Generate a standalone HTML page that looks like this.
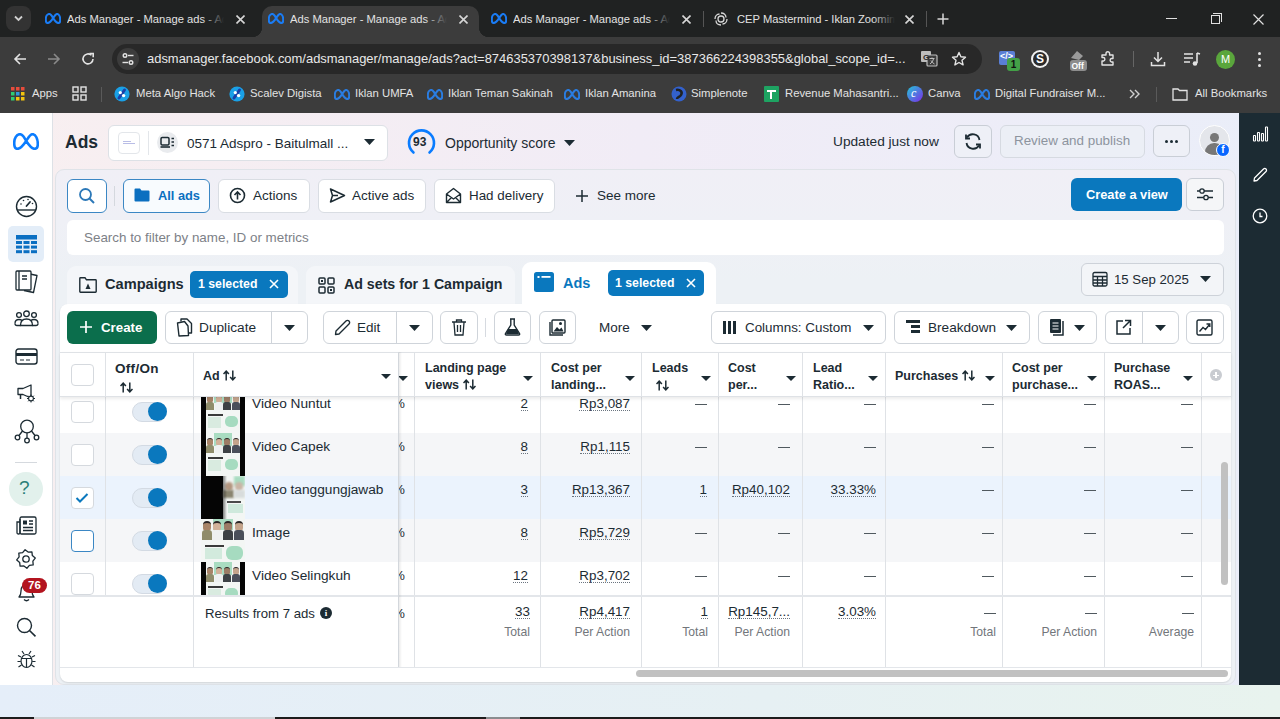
<!DOCTYPE html>
<html><head><meta charset="utf-8">
<style>
*{box-sizing:border-box;margin:0;padding:0}
html,body{width:1280px;height:719px;overflow:hidden;background:#e6eef6;font-family:"Liberation Sans",sans-serif;color:#1c2b33}
.a{position:absolute}
.nw{white-space:nowrap}
/* browser chrome */
#frame{left:0;top:0;width:1280px;height:37px;background:#202222}
#toolbar{left:0;top:37px;width:1280px;height:76px;background:#3c3c3c}
.tabt{font-size:11.2px;color:#e3e3e3;top:13px;white-space:nowrap;overflow:hidden}
.bm{font-size:11.3px;color:#e3e3e3;top:87px;white-space:nowrap}
/* page */
#page{left:0;top:113px;width:1280px;height:572px;background:linear-gradient(90deg,#f8eff0 0%,#f1ecf6 50%,#eaeef9 100%)}
#lnav{left:0;top:113px;width:53px;height:572px;background:#fff;border-right:1px solid #dde1e6}
#rnav{left:1239px;top:113px;width:41px;height:572px;background:#1c2b33}
#bottom{left:0;top:685px;width:1280px;height:32px;background:linear-gradient(90deg,#e5eef9,#e6f0f3 60%,#e8f3ee)}
#taskbar{left:0;top:716px;width:1280px;height:3px;background:#d9dde0}
.btn{position:absolute;background:#fff;border:1px solid #cbd2d9;border-radius:6px}
.t14{font-size:13.5px}
</style></head><body>
<!-- ============ BROWSER CHROME ============ -->
<div id="frame" class="a"></div>
<div id="toolbar" class="a"></div>

<!-- tab search btn -->
<div class="a" style="left:6px;top:6px;width:25px;height:25px;border-radius:8px;background:#333"></div>
<svg class="a" style="left:12px;top:13px" width="13" height="11" viewBox="0 0 13 11"><path d="M3 3.5 L6.5 7 L10 3.5" stroke="#d0d0d0" stroke-width="1.8" fill="none"/></svg>
<!-- active tab -->
<div class="a" style="left:262px;top:6px;width:217px;height:31px;background:#3c3c3c;border-radius:10px 10px 0 0"></div>
<div class="a" style="left:252px;top:27px;width:10px;height:10px;background:radial-gradient(circle at 0 0,#202222 10px,#3c3c3c 10.5px)"></div>
<div class="a" style="left:479px;top:27px;width:10px;height:10px;background:radial-gradient(circle at 10px 0,#202222 10px,#3c3c3c 10.5px)"></div>
<svg class="a" style="left:45px;top:13px" width="16" height="11" viewBox="0 0 26 17"><path d="M13.2,8 C11.5,4.5 9.5,1.2 7,1.2 C3.5,1.2 1.2,5.5 1.2,10 C1.2,13.5 2.5,15.8 4.5,15.8 C7.5,15.8 10.5,12 13.2,8 C15.5,4.5 17,1.2 19.5,1.2 C22.8,1.2 24.8,6 24.8,11 C24.8,14 23.5,15.8 21.5,15.8 C18.5,15.8 15.5,11.5 13.2,8 Z" stroke="#1a7cf5" stroke-width="3.4499999999999997" fill="none" stroke-linejoin="round"/></svg><div class="a tabt" style="left:67px;width:157px;">Ads Manager - Manage ads - Ads Manager</div><div class="a" style="left:202px;top:8px;width:22px;height:20px;background:linear-gradient(90deg,rgba(0,0,0,0),#202222)"></div><svg class="a" style="left:235.5px;top:14.5px" width="9" height="9" viewBox="0 0 9 9"><path d="M0.5 0.5 L8.5 8.5 M8.5 0.5 L0.5 8.5" stroke="#d6d6d6" stroke-width="1.6"/></svg><svg class="a" style="left:268px;top:13px" width="16" height="11" viewBox="0 0 26 17"><path d="M13.2,8 C11.5,4.5 9.5,1.2 7,1.2 C3.5,1.2 1.2,5.5 1.2,10 C1.2,13.5 2.5,15.8 4.5,15.8 C7.5,15.8 10.5,12 13.2,8 C15.5,4.5 17,1.2 19.5,1.2 C22.8,1.2 24.8,6 24.8,11 C24.8,14 23.5,15.8 21.5,15.8 C18.5,15.8 15.5,11.5 13.2,8 Z" stroke="#1a7cf5" stroke-width="3.4499999999999997" fill="none" stroke-linejoin="round"/></svg><div class="a tabt" style="left:290px;width:157px;">Ads Manager - Manage ads - Ads Manager</div><div class="a" style="left:425px;top:8px;width:22px;height:20px;background:linear-gradient(90deg,rgba(0,0,0,0),#3c3c3c)"></div><svg class="a" style="left:458.5px;top:14.5px" width="9" height="9" viewBox="0 0 9 9"><path d="M0.5 0.5 L8.5 8.5 M8.5 0.5 L0.5 8.5" stroke="#d6d6d6" stroke-width="1.6"/></svg><svg class="a" style="left:491px;top:13px" width="16" height="11" viewBox="0 0 26 17"><path d="M13.2,8 C11.5,4.5 9.5,1.2 7,1.2 C3.5,1.2 1.2,5.5 1.2,10 C1.2,13.5 2.5,15.8 4.5,15.8 C7.5,15.8 10.5,12 13.2,8 C15.5,4.5 17,1.2 19.5,1.2 C22.8,1.2 24.8,6 24.8,11 C24.8,14 23.5,15.8 21.5,15.8 C18.5,15.8 15.5,11.5 13.2,8 Z" stroke="#1a7cf5" stroke-width="3.4499999999999997" fill="none" stroke-linejoin="round"/></svg><div class="a tabt" style="left:513px;width:157px;">Ads Manager - Manage ads - Ads Manager</div><div class="a" style="left:648px;top:8px;width:22px;height:20px;background:linear-gradient(90deg,rgba(0,0,0,0),#202222)"></div><svg class="a" style="left:681.5px;top:14.5px" width="9" height="9" viewBox="0 0 9 9"><path d="M0.5 0.5 L8.5 8.5 M8.5 0.5 L0.5 8.5" stroke="#d6d6d6" stroke-width="1.6"/></svg><div class="a" style="left:703px;top:11px;width:1px;height:16px;background:#555"></div><svg class="a" style="left:713px;top:11px" width="16" height="16" viewBox="0 0 16 16"><g stroke="#d8d8d8" stroke-width="1.3" fill="none"><circle cx="8" cy="8" r="3"/><path d="M8 2 C11 2 13 4 13 6.5 M14 8 C14 11 12 13 9.5 13 M8 14 C5 14 3 12 3 9.5 M2 8 C2 5 4 3 6.5 3"/></g></svg><div class="a tabt" style="left:737px;width:158px;">CEP Mastermind - Iklan Zooming</div><div class="a" style="left:873px;top:8px;width:22px;height:20px;background:linear-gradient(90deg,rgba(0,0,0,0),#202222)"></div><svg class="a" style="left:904.5px;top:14.5px" width="9" height="9" viewBox="0 0 9 9"><path d="M0.5 0.5 L8.5 8.5 M8.5 0.5 L0.5 8.5" stroke="#d6d6d6" stroke-width="1.6"/></svg><div class="a" style="left:926px;top:11px;width:1px;height:16px;background:#555"></div><svg class="a" style="left:937px;top:13px" width="12" height="12" viewBox="0 0 12 12"><path d="M6 0.5 V11.5 M0.5 6 H11.5" stroke="#d8d8d8" stroke-width="1.5"/></svg><div class="a" style="left:1166px;top:18px;width:11px;height:1px;background:#e0e0e0"></div><div class="a" style="left:1211px;top:15px;width:9px;height:9px;border:1px solid #e0e0e0"></div><div class="a" style="left:1213px;top:13px;width:9px;height:9px;border-top:1px solid #e0e0e0;border-right:1px solid #e0e0e0"></div><svg class="a" style="left:1252.5px;top:13.5px" width="11" height="11" viewBox="0 0 11 11"><path d="M0.5 0.5 L10.5 10.5 M10.5 0.5 L0.5 10.5" stroke="#e0e0e0" stroke-width="1.2"/></svg><svg class="a" style="left:12px;top:51px" width="16" height="16" viewBox="0 0 16 16"><path d="M14 8 H3 M8 3 L3 8 L8 13" stroke="#e3e3e3" stroke-width="1.6" fill="none"/></svg><svg class="a" style="left:46px;top:51px" width="16" height="16" viewBox="0 0 16 16"><path d="M2 8 H13 M8 3 L13 8 L8 13" stroke="#8a8a8a" stroke-width="1.6" fill="none"/></svg><svg class="a" style="left:80px;top:51px" width="16" height="16" viewBox="0 0 16 16"><path d="M13 8 A5 5 0 1 1 11.5 4.3" stroke="#e3e3e3" stroke-width="1.6" fill="none"/><path d="M9.5 2.5 H13.2 V6.2" stroke="#e3e3e3" stroke-width="1.6" fill="none"/></svg><div class="a" style="left:112px;top:44px;width:870px;height:30px;border-radius:15px;background:#282828"></div><div class="a" style="left:117px;top:48px;width:22px;height:22px;border-radius:11px;background:#3c3c3c"></div><svg class="a" style="left:121px;top:52px" width="14" height="14" viewBox="0 0 14 14"><g stroke="#e3e3e3" stroke-width="1.4" fill="none"><circle cx="4" cy="3.5" r="1.8"/><path d="M7 3.5 H12.5"/><circle cx="10" cy="10.5" r="1.8"/><path d="M1.5 10.5 H7"/></g></svg><div class="a nw" style="left:147px;top:51px;font-size:12.95px;color:#e8e8e8">adsmanager.facebook.com/adsmanager/manage/ads?act=874635370398137&amp;business_id=387366224398355&amp;global_scope_id=...</div><svg class="a" style="left:920px;top:50px" width="18" height="17" viewBox="0 0 18 17"><rect x="1" y="1" width="10" height="11" rx="1" fill="#bdbdbd"/><rect x="7" y="5" width="10" height="11" rx="1" fill="#3c3c3c" stroke="#bdbdbd" stroke-width="1.2"/><text x="3" y="10" font-size="8" font-family="Liberation Sans" font-weight="bold" fill="#282828">G</text><path d="M9.5 8.5 H14.5 M12 7.5 V9 M10 14 Q13 12 13.5 9 M11 10.5 Q12.5 13 14.5 14" stroke="#bdbdbd" stroke-width="1" fill="none"/></svg><svg class="a" style="left:951px;top:51px" width="16" height="16" viewBox="0 0 16 16"><path d="M8 1.5 L9.9 5.8 L14.5 6.2 L11 9.3 L12.1 13.9 L8 11.5 L3.9 13.9 L5 9.3 L1.5 6.2 L6.1 5.8 Z" stroke="#e3e3e3" stroke-width="1.4" fill="none" stroke-linejoin="round"/></svg><div class="a" style="left:999px;top:51px;width:16px;height:14px;background:#5a7fd6;border-radius:2px"></div><div class="a nw" style="left:1000px;top:51px;font-size:9px;color:#fff;font-weight:bold">&lt;/&gt;</div><div class="a" style="left:1007px;top:58px;width:13px;height:13px;background:#43a047;border-radius:3px;color:#111;font-size:10px;font-weight:bold;text-align:center;line-height:13px">1</div><div class="a" style="left:1031px;top:50px;width:18px;height:18px;border-radius:9px;background:#f2f2f2"></div><div class="a" style="left:1033px;top:52px;width:14px;height:14px;border-radius:7px;background:#2b2b2b;color:#fff;font-size:12px;font-weight:bold;text-align:center;line-height:14px">S</div><svg class="a" style="left:1067px;top:48px" width="22" height="24" viewBox="0 0 22 24"><path d="M4 10 L10 3 L16 8 L12 12 Z" fill="#9a9a9a"/><rect x="3" y="12" width="17" height="11" rx="3" fill="#8d8d8d"/><text x="4.5" y="21" font-size="8.5" font-weight="bold" font-family="Liberation Sans" fill="#fff">Off</text></svg><svg class="a" style="left:1099px;top:50px" width="18" height="18" viewBox="0 0 18 18"><path d="M3 5 H7 V3.5 A1.8 1.8 0 0 1 10.6 3.5 V5 H14 V8.5 H12.5 A1.8 1.8 0 0 0 12.5 12 H14 V15 H3 V11 H4.5 A1.8 1.8 0 0 0 4.5 7.5 H3 Z" stroke="#e3e3e3" stroke-width="1.4" fill="none" stroke-linejoin="round"/></svg><div class="a" style="left:1133px;top:51px;width:1px;height:16px;background:#666"></div><svg class="a" style="left:1149px;top:50px" width="18" height="18" viewBox="0 0 18 18"><path d="M9 2 V11 M5 7.5 L9 11.5 L13 7.5 M2.5 12 V15.5 H15.5 V12" stroke="#e3e3e3" stroke-width="1.5" fill="none"/></svg><svg class="a" style="left:1183px;top:51px" width="18" height="16" viewBox="0 0 18 16"><path d="M1 3 H10 M1 7 H10 M1 11 H7" stroke="#e3e3e3" stroke-width="1.5"/><path d="M14 2 V12" stroke="#e3e3e3" stroke-width="1.6"/><circle cx="12" cy="12.5" r="2.3" fill="#e3e3e3"/><path d="M14 2 L17 3" stroke="#e3e3e3" stroke-width="1.5"/></svg><div class="a" style="left:1216px;top:50px;width:19px;height:19px;border-radius:10px;background:#5aa63c;color:#fff;font-size:11px;text-align:center;line-height:19px">M</div><div class="a" style="left:1258px;top:52px;width:3px;height:3px;border-radius:2px;background:#e3e3e3"></div><div class="a" style="left:1258px;top:58px;width:3px;height:3px;border-radius:2px;background:#e3e3e3"></div><div class="a" style="left:1258px;top:64px;width:3px;height:3px;border-radius:2px;background:#e3e3e3"></div><svg class="a" style="left:11px;top:87px" width="14" height="14" viewBox="0 0 14 14"><g><rect x="0" y="0" width="3.5" height="3.5" fill="#e74c3c"/><rect x="5" y="0" width="3.5" height="3.5" fill="#e74c3c"/><rect x="10" y="0" width="3.5" height="3.5" fill="#e74c3c"/><rect x="0" y="5" width="3.5" height="3.5" fill="#2ecc71"/><rect x="5" y="5" width="3.5" height="3.5" fill="#3498db"/><rect x="10" y="5" width="3.5" height="3.5" fill="#f1c40f"/><rect x="0" y="10" width="3.5" height="3.5" fill="#2ecc71"/><rect x="5" y="10" width="3.5" height="3.5" fill="#f1c40f"/><rect x="10" y="10" width="3.5" height="3.5" fill="#f1c40f"/></g></svg><div class="a bm" style="left:32px">Apps</div><svg class="a" style="left:72px;top:86px" width="15" height="15" viewBox="0 0 15 15"><g stroke="#e3e3e3" stroke-width="1.4" fill="none"><rect x="1" y="1" width="5" height="5"/><rect x="9" y="1" width="5" height="5"/><rect x="1" y="9" width="5" height="5"/><rect x="9" y="9" width="5" height="5"/></g></svg><div class="a" style="left:101px;top:87px;width:1px;height:15px;background:#5a5a5a"></div><svg class="a" style="left:114px;top:86px" width="16" height="16" viewBox="0 0 16 16"><circle cx="8" cy="8" r="7.6" fill="#1aa0e6"/><path d="M10.5 4 L5 12" stroke="#1a3fa8" stroke-width="3" stroke-linecap="round"/><circle cx="6.3" cy="6.6" r="1.6" fill="#fff"/><circle cx="9.6" cy="9.6" r="1.7" fill="#fff"/></svg><div class="a bm" style="left:136px">Meta Algo Hack</div><svg class="a" style="left:229px;top:86px" width="16" height="16" viewBox="0 0 16 16"><circle cx="8" cy="8" r="7.6" fill="#1aa0e6"/><path d="M10.5 4 L5 12" stroke="#1a3fa8" stroke-width="3" stroke-linecap="round"/><circle cx="6.3" cy="6.6" r="1.6" fill="#fff"/><circle cx="9.6" cy="9.6" r="1.7" fill="#fff"/></svg><div class="a bm" style="left:250px">Scalev Digista</div><svg class="a" style="left:334px;top:89px" width="16" height="11" viewBox="0 0 26 17"><path d="M13.2,8 C11.5,4.5 9.5,1.2 7,1.2 C3.5,1.2 1.2,5.5 1.2,10 C1.2,13.5 2.5,15.8 4.5,15.8 C7.5,15.8 10.5,12 13.2,8 C15.5,4.5 17,1.2 19.5,1.2 C22.8,1.2 24.8,6 24.8,11 C24.8,14 23.5,15.8 21.5,15.8 C18.5,15.8 15.5,11.5 13.2,8 Z" stroke="#2a7de1" stroke-width="3.4499999999999997" fill="none" stroke-linejoin="round"/></svg><div class="a bm" style="left:355px">Iklan UMFA</div><svg class="a" style="left:427px;top:89px" width="16" height="11" viewBox="0 0 26 17"><path d="M13.2,8 C11.5,4.5 9.5,1.2 7,1.2 C3.5,1.2 1.2,5.5 1.2,10 C1.2,13.5 2.5,15.8 4.5,15.8 C7.5,15.8 10.5,12 13.2,8 C15.5,4.5 17,1.2 19.5,1.2 C22.8,1.2 24.8,6 24.8,11 C24.8,14 23.5,15.8 21.5,15.8 C18.5,15.8 15.5,11.5 13.2,8 Z" stroke="#2a7de1" stroke-width="3.4499999999999997" fill="none" stroke-linejoin="round"/></svg><div class="a bm" style="left:448px">Iklan Teman Sakinah</div><svg class="a" style="left:564px;top:89px" width="16" height="11" viewBox="0 0 26 17"><path d="M13.2,8 C11.5,4.5 9.5,1.2 7,1.2 C3.5,1.2 1.2,5.5 1.2,10 C1.2,13.5 2.5,15.8 4.5,15.8 C7.5,15.8 10.5,12 13.2,8 C15.5,4.5 17,1.2 19.5,1.2 C22.8,1.2 24.8,6 24.8,11 C24.8,14 23.5,15.8 21.5,15.8 C18.5,15.8 15.5,11.5 13.2,8 Z" stroke="#2a7de1" stroke-width="3.4499999999999997" fill="none" stroke-linejoin="round"/></svg><div class="a bm" style="left:585px">Iklan Amanina</div><svg class="a" style="left:671px;top:86px" width="16" height="16" viewBox="0 0 16 16"><circle cx="8" cy="8" r="7.5" fill="#3361cc"/><path d="M5 4 C9 3 12 6 10 9 C9 11 6 11 6 13" stroke="#202222" stroke-width="2.5" fill="none"/></svg><div class="a bm" style="left:691px">Simplenote</div><div class="a" style="left:764px;top:86px;width:15px;height:16px;background:#1ea362;border-radius:1px"></div><div class="a" style="left:767px;top:90px;width:9px;height:2px;background:#fff"></div><div class="a" style="left:770px;top:90px;width:2px;height:9px;background:#fff"></div><div class="a bm" style="left:785px">Revenue Mahasantri...</div><div class="a" style="left:907px;top:86px;width:16px;height:16px;border-radius:8px;background:linear-gradient(135deg,#22c7d8,#7d2ae8)"></div><div class="a" style="left:911px;top:86px;font-size:12px;color:#fff;font-style:italic;font-family:Liberation Serif">c</div><div class="a bm" style="left:928px">Canva</div><svg class="a" style="left:974px;top:89px" width="16" height="11" viewBox="0 0 26 17"><path d="M13.2,8 C11.5,4.5 9.5,1.2 7,1.2 C3.5,1.2 1.2,5.5 1.2,10 C1.2,13.5 2.5,15.8 4.5,15.8 C7.5,15.8 10.5,12 13.2,8 C15.5,4.5 17,1.2 19.5,1.2 C22.8,1.2 24.8,6 24.8,11 C24.8,14 23.5,15.8 21.5,15.8 C18.5,15.8 15.5,11.5 13.2,8 Z" stroke="#2a7de1" stroke-width="3.4499999999999997" fill="none" stroke-linejoin="round"/></svg><div class="a bm" style="left:995px">Digital Fundraiser M...</div><svg class="a" style="left:1129px;top:89px" width="12" height="10" viewBox="0 0 12 10"><path d="M1 1 L5 5 L1 9 M6 1 L10 5 L6 9" stroke="#cfcfcf" stroke-width="1.4" fill="none"/></svg><div class="a" style="left:1156px;top:87px;width:1px;height:15px;background:#5a5a5a"></div><svg class="a" style="left:1172px;top:87px" width="16" height="14" viewBox="0 0 16 14"><path d="M1 2 H6 L7.5 3.5 H15 V13 H1 Z" stroke="#e3e3e3" stroke-width="1.3" fill="none"/></svg><div class="a bm" style="left:1195px">All Bookmarks</div>
<!--PAGE-->
<!--P1-->
<div id="page" class="a"></div>
<div id="bottom" class="a"></div><div class="a" style="left:0;top:717px;width:1280px;height:2px;background:#1c1c1c"></div><div class="a" style="left:34px;top:717px;width:241px;height:2px;background:#cfd3d6"></div><div class="a" style="left:486px;top:717px;width:34px;height:2px;background:#8a8d90"></div>
<div id="lnav" class="a"></div>
<div id="rnav" class="a"></div>
<svg class="a" style="left:13px;top:133px" width="26" height="17" viewBox="0 0 26 17"><path d="M13.2,8 C11.5,4.5 9.5,1.2 7,1.2 C3.5,1.2 1.2,5.5 1.2,10 C1.2,13.5 2.5,15.8 4.5,15.8 C7.5,15.8 10.5,12 13.2,8 C15.5,4.5 17,1.2 19.5,1.2 C22.8,1.2 24.8,6 24.8,11 C24.8,14 23.5,15.8 21.5,15.8 C18.5,15.8 15.5,11.5 13.2,8 Z" stroke="#0a7cff" stroke-width="2.6" fill="none" stroke-linejoin="round"/></svg>
<div class="a nw" style="left:65px;top:131.5px;font-size:17.5px;font-weight:bold;color:#1c2b33">Ads</div>
<div class="btn" style="left:108px;top:125px;width:280px;height:36px;border-color:#dde1e6"></div>
<div class="a" style="left:118px;top:132px;width:22px;height:22px;border:1px solid #e3e6ea;border-radius:4px;background:#fff"></div><div class="a" style="left:123px;top:141px;width:8px;height:1px;background:#b9bde6"></div><div class="a" style="left:123px;top:143px;width:12px;height:1px;background:#b9bde6"></div>
<div class="a" style="left:148px;top:131px;width:1px;height:24px;background:#e3e6ea"></div>
<div class="a" style="left:157px;top:132px;width:21px;height:21px;border-radius:11px;background:#e9ebee"></div>
<svg class="a" style="left:160px;top:136px" width="15" height="13" viewBox="0 0 15 13"><rect x="1" y="1.5" width="8" height="7.5" rx="1.2" stroke="#1c2b33" stroke-width="1.5" fill="none"/><path d="M0.5 11 H10" stroke="#1c2b33" stroke-width="1.6"/><path d="M11.5 2.5 H14 M11.5 6 H14 M11.5 9.5 H14" stroke="#1c2b33" stroke-width="1.4"/></svg>
<div class="a nw" style="left:187px;top:136px;font-size:13.5px;color:#1c2b33">0571 Adspro - Baitulmall ...</div>
<svg class="a" style="left:363.5px;top:139px" width="11" height="6" viewBox="0 0 11 6"><path d="M0 0 H11 L5.5 6 Z" fill="#1c2b33"/></svg>
<svg class="a" style="left:407px;top:128px" width="29" height="29" viewBox="0 0 29 29"><path d="M6.5 24.5 A12.5 12.5 0 1 1 22.5 24.5" stroke="#0a7cff" stroke-width="2.6" fill="none" stroke-linecap="round"/></svg>
<div class="a nw" style="left:413px;top:135px;font-size:12px;font-weight:bold;color:#1c2b33">93</div>
<div class="a nw" style="left:445px;top:135px;font-size:14px;color:#1c2b33">Opportunity score</div>
<svg class="a" style="left:563.5px;top:140px" width="11" height="6" viewBox="0 0 11 6"><path d="M0 0 H11 L5.5 6 Z" fill="#1c2b33"/></svg>
<div class="a nw" style="left:833px;top:134px;font-size:13.7px;color:#1c2b33">Updated just now</div>
<div class="btn" style="left:954px;top:125px;width:38px;height:33px;background:#eef0f7;border-color:#c9ced6"></div>
<svg class="a" style="left:963px;top:132px" width="20" height="19" viewBox="0 0 20 19"><path d="M16.5 8 A6.8 6.8 0 0 0 4 5.5 M3.5 11 A6.8 6.8 0 0 0 16 13.5" stroke="#1c2b33" stroke-width="1.8" fill="none"/><path d="M3 2.5 V6.5 H7" stroke="#1c2b33" stroke-width="1.8" fill="none"/><path d="M17 16.5 V12.5 H13" stroke="#1c2b33" stroke-width="1.8" fill="none"/></svg>
<div class="btn" style="left:1000px;top:125px;width:145px;height:33px;background:#eceff6;border-color:#d6dae1"></div>
<div class="a nw" style="left:1014px;top:133px;font-size:13.4px;color:#8d949e">Review and publish</div>
<div class="btn" style="left:1153px;top:125px;width:37px;height:32px;background:#eef0f7;border-color:#c9ced6"></div>
<div class="a" style="left:1165px;top:140px;width:3px;height:3px;border-radius:2px;background:#1c2b33"></div><div class="a" style="left:1170px;top:140px;width:3px;height:3px;border-radius:2px;background:#1c2b33"></div><div class="a" style="left:1175px;top:140px;width:3px;height:3px;border-radius:2px;background:#1c2b33"></div>
<div class="a" style="left:1199px;top:125px;width:31px;height:31px;border-radius:16px;background:#e4e6eb;border:1.5px solid #fff;overflow:hidden"><div class="a" style="left:10px;top:7px;width:9px;height:9px;border-radius:5px;background:#777"></div><div class="a" style="left:5px;top:17px;width:19px;height:14px;border-radius:9px 9px 0 0;background:#777"></div></div>
<div class="a" style="left:1216px;top:143px;width:14px;height:14px;border-radius:7px;background:#0866ff;border:1.5px solid #fff;color:#fff;font-size:10px;font-weight:bold;text-align:center;line-height:12px">f</div>
<svg class="a" style="left:1252px;top:126px" width="17" height="16" viewBox="0 0 17 16"><g fill="none" stroke="#fff" stroke-width="1.1"><rect x="1.5" y="9.5" width="2" height="5.5" rx=".5"/><rect x="5.5" y="6.5" width="2" height="8.5" rx=".5"/><rect x="9.5" y="7.5" width="2" height="7.5" rx=".5"/><rect x="13.5" y="1" width="2" height="14" rx=".5"/></g></svg>
<svg class="a" style="left:1252px;top:167px" width="16" height="16" viewBox="0 0 16 16"><path d="M2 14 L2.5 11 L11.5 2 A1.5 1.5 0 0 1 14 4.5 L5 13.5 Z" stroke="#fff" stroke-width="1.3" fill="none" stroke-linejoin="round"/></svg>
<svg class="a" style="left:1252px;top:208px" width="16" height="16" viewBox="0 0 16 16"><circle cx="8" cy="8" r="6.8" stroke="#fff" stroke-width="1.3" fill="none"/><path d="M8 4.5 V8.5 H10.5" stroke="#fff" stroke-width="1.3" fill="none"/></svg>
<!--/P1-->
<!--P2-->
<div class="a" style="left:55px;top:169px;width:1181px;height:516px;background:linear-gradient(180deg,#f0eff6 0px,#eff0f6 50px,#edf1f5 110px);border:1px solid #dfe3e8;border-radius:9px"></div>
<div class="btn" style="left:67px;top:179px;width:40px;height:34px;border:1.5px solid #3b87c4;background:#fff"></div>
<svg class="a" style="left:78px;top:187px" width="18" height="18" viewBox="0 0 18 18"><circle cx="7.5" cy="7.5" r="5.5" stroke="#2c78b8" stroke-width="1.8" fill="none"/><path d="M11.5 11.5 L16 16" stroke="#2c78b8" stroke-width="1.9"/></svg>
<div class="a" style="left:114px;top:186px;width:1px;height:20px;background:#d4d8de"></div>
<div class="btn" style="left:123px;top:179px;width:87px;height:34px;border:1.5px solid #3b87c4;background:#f8fbfe"></div>
<svg class="a" style="left:134px;top:188px" width="16" height="14" viewBox="0 0 16 14"><path d="M0.5 1.5 Q0.5 0.5 1.5 0.5 H6 L7.5 2.5 H14.5 Q15.5 2.5 15.5 3.5 V12.5 Q15.5 13.5 14.5 13.5 H1.5 Q0.5 13.5 0.5 12.5 Z" fill="#0b6fc0"/></svg>
<div class="a nw" style="left:158px;top:188px;font-size:12.8px;font-weight:bold;color:#0b6fc0">All ads</div>
<div class="btn" style="left:218px;top:179px;width:92px;height:34px;border-color:#d9dde3"></div>
<svg class="a" style="left:229px;top:187px" width="17" height="17" viewBox="0 0 17 17"><circle cx="8.5" cy="8.5" r="7" stroke="#1c2b33" stroke-width="1.6" fill="none"/><path d="M8.5 12.5 V5 M5.5 8 L8.5 5 L11.5 8" stroke="#1c2b33" stroke-width="1.6" fill="none"/></svg>
<div class="a nw" style="left:253px;top:188px;font-size:13.5px;color:#1c2b33">Actions</div>
<div class="btn" style="left:318px;top:179px;width:108px;height:34px;border-color:#d9dde3"></div>
<svg class="a" style="left:329px;top:187px" width="17" height="17" viewBox="0 0 17 17"><path d="M1.5 2 L15.5 8.5 L1.5 15 L3.5 8.5 Z M3.5 8.5 H9" stroke="#1c2b33" stroke-width="1.5" fill="none" stroke-linejoin="round"/></svg>
<div class="a nw" style="left:352px;top:188px;font-size:13.5px;color:#1c2b33">Active ads</div>
<div class="btn" style="left:434px;top:179px;width:121px;height:34px;border-color:#d9dde3"></div>
<svg class="a" style="left:445px;top:187px" width="17" height="17" viewBox="0 0 17 17"><path d="M1.5 7 L8.5 1.5 L15.5 7 V15.5 H1.5 Z M1.5 7 L8.5 12 L15.5 7 M1.5 15.5 L6.5 10.5 M15.5 15.5 L10.5 10.5" stroke="#1c2b33" stroke-width="1.4" fill="none" stroke-linejoin="round"/></svg>
<div class="a nw" style="left:469px;top:188px;font-size:13.4px;color:#1c2b33">Had delivery</div>
<svg class="a" style="left:576px;top:190px" width="12" height="12" viewBox="0 0 12 12"><path d="M6 0 V12 M0 6 H12" stroke="#1c2b33" stroke-width="1.5"/></svg>
<div class="a nw" style="left:597px;top:188px;font-size:13.5px;color:#1c2b33">See more</div>
<div class="a" style="left:1071px;top:178px;width:111px;height:33px;border-radius:6px;background:#0a78be"></div>
<div class="a nw" style="left:1086px;top:187px;font-size:12.8px;font-weight:bold;color:#fff">Create a view</div>
<div class="btn" style="left:1186px;top:178px;width:38px;height:33px;background:#f5f6f8;border-color:#c9ced6"></div>
<svg class="a" style="left:1196px;top:187px" width="18" height="15" viewBox="0 0 18 15"><path d="M1 4 H17 M1 10.5 H17" stroke="#1c2b33" stroke-width="1.3"/><circle cx="6" cy="4" r="2.2" fill="#f5f6f8" stroke="#1c2b33" stroke-width="1.3"/><circle cx="10" cy="10.5" r="2.2" fill="#f5f6f8" stroke="#1c2b33" stroke-width="1.3"/></svg>
<div class="a" style="left:67px;top:220px;width:1157px;height:35px;background:#fff;border-radius:6px"></div>
<div class="a nw" style="left:84px;top:230px;font-size:13.4px;color:#7d8187">Search to filter by name, ID or metrics</div>
<div class="a" style="left:67px;top:266px;width:231px;height:40px;background:#f4f6f9;border-radius:9px 9px 0 0"></div>
<svg class="a" style="left:79px;top:277px" width="18" height="16" viewBox="0 0 18 16"><path d="M0.8 1.5 Q0.8 0.8 1.5 0.8 H6 L7.5 2.8 H16.5 Q17.2 2.8 17.2 3.5 V14.5 Q17.2 15.2 16.5 15.2 H1.5 Q0.8 15.2 0.8 14.5 Z" stroke="#1c2b33" stroke-width="1.4" fill="none"/><path d="M6.5 12 L9 6.5 L11.5 12 Z" fill="#1c2b33"/></svg>
<div class="a nw" style="left:105px;top:276px;font-size:14.6px;font-weight:bold;color:#1c2b33">Campaigns</div>
<div class="a" style="left:190px;top:271px;width:98px;height:27px;border-radius:5px;background:#0a78be"></div>
<div class="a nw" style="left:198px;top:277px;font-size:12.3px;font-weight:bold;color:#fff">1 selected</div>
<svg class="a" style="left:269px;top:279px" width="10" height="10" viewBox="0 0 10 10"><path d="M1 1 L9 9 M9 1 L1 9" stroke="#fff" stroke-width="1.6"/></svg>
<div class="a" style="left:306px;top:266px;width:209px;height:40px;background:#f4f6f9;border-radius:9px 9px 0 0"></div>
<svg class="a" style="left:318px;top:277px" width="17" height="17" viewBox="0 0 17 17"><g stroke="#1c2b33" stroke-width="1.5" fill="none"><rect x="1" y="1" width="6" height="6" rx="1"/><rect x="10" y="1" width="6" height="6" rx="1"/><rect x="1" y="10" width="6" height="6" rx="1"/><rect x="10" y="10" width="6" height="6" rx="1"/></g><rect x="3" y="3" width="2" height="2" fill="#1c2b33"/><rect x="12" y="12" width="2" height="2" fill="#1c2b33"/></svg>
<div class="a nw" style="left:344px;top:276px;font-size:14.2px;font-weight:bold;color:#1c2b33">Ad sets for 1 Campaign</div>
<div class="a" style="left:522px;top:262px;width:194px;height:44px;background:#fff;border-radius:9px 9px 0 0"></div>
<svg class="a" style="left:534px;top:272px" width="20" height="20" viewBox="0 0 20 20"><rect x="0" y="0" width="20" height="20" rx="2.5" fill="#0a78be"/><rect x="3.5" y="4" width="2" height="2" fill="#fff"/><rect x="7.5" y="4" width="9" height="1.8" fill="#fff"/></svg>
<div class="a nw" style="left:563px;top:275px;font-size:14.5px;font-weight:bold;color:#0a78be">Ads</div>
<div class="a" style="left:608px;top:270px;width:96px;height:26px;border-radius:5px;background:#0a78be"></div>
<div class="a nw" style="left:615px;top:276px;font-size:12.3px;font-weight:bold;color:#fff">1 selected</div>
<svg class="a" style="left:686px;top:278px" width="10" height="10" viewBox="0 0 10 10"><path d="M1 1 L9 9 M9 1 L1 9" stroke="#fff" stroke-width="1.6"/></svg>
<div class="btn" style="left:1081px;top:263px;width:143px;height:33px;background:#f3f5f8;border-color:#cdd2d9"></div>
<svg class="a" style="left:1092px;top:271px" width="16" height="16" viewBox="0 0 16 16"><g stroke="#1c2b33" stroke-width="1.3" fill="none"><rect x="1" y="1.5" width="14" height="13.5" rx="1.5"/><path d="M1 5.5 H15 M1 9 H15 M1 12 H15 M5.5 5.5 V15 M10.5 5.5 V15"/></g></svg>
<div class="a nw" style="left:1114px;top:272px;font-size:13.2px;color:#1c2b33">15 Sep 2025</div>
<svg class="a" style="left:1199.5px;top:276px" width="11" height="6" viewBox="0 0 11 6"><path d="M0 0 H11 L5.5 6 Z" fill="#1c2b33"/></svg>
<div class="a" style="left:60px;top:304px;width:1171px;height:378px;background:#fff;border-radius:8px 8px 8px 8px;box-shadow:0 1px 2px rgba(0,0,0,.12)"></div>
<div class="a" style="left:522px;top:300px;width:194px;height:8px;background:#fff"></div>
<div class="a" style="left:67px;top:311px;width:90px;height:33px;border-radius:6px;background:#0b6e4c"></div>
<svg class="a" style="left:80px;top:321px" width="12" height="12" viewBox="0 0 12 12"><path d="M6 0 V12 M0 6 H12" stroke="#fff" stroke-width="1.7"/></svg>
<div class="a nw" style="left:101px;top:320px;font-size:13.3px;font-weight:bold;color:#fff">Create</div>
<div class="btn" style="left:165px;top:311px;width:143px;height:33px;border-color:#cfd4da"></div><div class="a" style="left:271px;top:312px;width:1px;height:31px;background:#cfd4da"></div>
<svg class="a" style="left:176px;top:318px" width="17" height="19" viewBox="0 0 17 19"><path d="M5 3.5 V1 H11 L15.5 5.5 V15 H12" stroke="#1c2b33" stroke-width="1.4" fill="none" stroke-linejoin="round"/><path d="M1.5 5 L8.5 3.5 L12 8 L12.5 17.5 L3 18 Z" stroke="#1c2b33" stroke-width="1.4" fill="#fff" stroke-linejoin="round"/></svg>
<div class="a nw" style="left:199px;top:320px;font-size:13.7px;color:#1c2b33">Duplicate</div>
<svg class="a" style="left:283.5px;top:325px" width="11" height="6" viewBox="0 0 11 6"><path d="M0 0 H11 L5.5 6 Z" fill="#1c2b33"/></svg>
<div class="btn" style="left:323px;top:311px;width:110px;height:33px;border-color:#cfd4da"></div><div class="a" style="left:396px;top:312px;width:1px;height:31px;background:#cfd4da"></div>
<svg class="a" style="left:334px;top:319px" width="17" height="17" viewBox="0 0 17 17"><path d="M1.5 15.5 L2 12 L12 2 A1.6 1.6 0 0 1 15 5 L5 15 Z" stroke="#1c2b33" stroke-width="1.4" fill="none" stroke-linejoin="round"/></svg>
<div class="a nw" style="left:357px;top:320px;font-size:13.5px;color:#1c2b33">Edit</div>
<svg class="a" style="left:408.5px;top:325px" width="11" height="6" viewBox="0 0 11 6"><path d="M0 0 H11 L5.5 6 Z" fill="#1c2b33"/></svg>
<div class="btn" style="left:440px;top:311px;width:38px;height:33px;border-color:#cfd4da"></div>
<svg class="a" style="left:451px;top:318px" width="16" height="18" viewBox="0 0 16 18"><path d="M1 4 H15 M5.5 4 V2 H10.5 V4 M3 4.5 L4 17 H12 L13 4.5 M6.5 7 V14 M9.5 7 V14" stroke="#1c2b33" stroke-width="1.3" fill="none"/></svg>
<div class="a" style="left:485px;top:318px;width:1px;height:19px;background:#d6dae0"></div>
<div class="btn" style="left:494px;top:311px;width:37px;height:33px;border-color:#cfd4da"></div>
<svg class="a" style="left:504px;top:318px" width="17" height="18" viewBox="0 0 17 18"><path d="M6 1 H11 M6.8 1 V7 L1.5 15.5 Q1 17 2.5 17 H14.5 Q16 17 15.5 15.5 L10.2 7 V1" stroke="#1c2b33" stroke-width="1.4" fill="none"/><path d="M4 11 H13 L15 16 H2 Z" fill="#1c2b33"/></svg>
<div class="btn" style="left:539px;top:311px;width:37px;height:33px;border-color:#cfd4da"></div>
<svg class="a" style="left:549px;top:319px" width="17" height="17" viewBox="0 0 17 17"><rect x="3" y="1" width="13" height="13" rx="1" stroke="#1c2b33" stroke-width="1.4" fill="none"/><path d="M1 3 V16 H14" stroke="#1c2b33" stroke-width="1.4" fill="none"/><path d="M4.5 12.5 L8 8 L10.5 10.5 L12.5 8.5 L14.5 12.5 Z" fill="#1c2b33"/><circle cx="11.5" cy="4.5" r="1.5" fill="#1c2b33"/></svg>
<div class="a nw" style="left:599px;top:320px;font-size:13.5px;color:#1c2b33">More</div>
<svg class="a" style="left:640.5px;top:325px" width="11" height="6" viewBox="0 0 11 6"><path d="M0 0 H11 L5.5 6 Z" fill="#1c2b33"/></svg>
<div class="btn" style="left:711px;top:311px;width:175px;height:33px;border-color:#cfd4da"></div>
<div class="a" style="left:723px;top:321px;width:3px;height:13px;background:#1c2b33"></div><div class="a" style="left:728px;top:321px;width:3px;height:13px;background:#1c2b33"></div><div class="a" style="left:733px;top:321px;width:3px;height:13px;background:#1c2b33"></div>
<div class="a nw" style="left:745px;top:320px;font-size:13.4px;color:#1c2b33">Columns: Custom</div>
<svg class="a" style="left:862.5px;top:325px" width="11" height="6" viewBox="0 0 11 6"><path d="M0 0 H11 L5.5 6 Z" fill="#1c2b33"/></svg>
<div class="btn" style="left:894px;top:311px;width:136px;height:33px;border-color:#cfd4da"></div>
<svg class="a" style="left:906px;top:320px" width="16" height="15" viewBox="0 0 16 15"><rect x="0" y="0" width="14" height="3" fill="#1c2b33"/><rect x="5" y="5" width="9" height="3" fill="#1c2b33"/><rect x="5" y="10" width="9" height="3" fill="#1c2b33"/></svg>
<div class="a nw" style="left:928px;top:320px;font-size:13.6px;color:#1c2b33">Breakdown</div>
<svg class="a" style="left:1005.5px;top:325px" width="11" height="6" viewBox="0 0 11 6"><path d="M0 0 H11 L5.5 6 Z" fill="#1c2b33"/></svg>
<div class="btn" style="left:1038px;top:311px;width:59px;height:33px;border-color:#cfd4da"></div>
<svg class="a" style="left:1049px;top:318px" width="17" height="18" viewBox="0 0 17 18"><rect x="1" y="1" width="11" height="14" rx="1" fill="#1c2b33"/><path d="M14 3 V17 H4" stroke="#1c2b33" stroke-width="1.5" fill="none"/><path d="M3.5 5 H9.5 M3.5 8 H9.5 M3.5 11 H9.5" stroke="#fff" stroke-width="1"/></svg>
<svg class="a" style="left:1073.5px;top:325px" width="11" height="6" viewBox="0 0 11 6"><path d="M0 0 H11 L5.5 6 Z" fill="#1c2b33"/></svg>
<div class="btn" style="left:1105px;top:311px;width:74px;height:33px;border-color:#cfd4da"></div><div class="a" style="left:1142px;top:312px;width:1px;height:31px;background:#cfd4da"></div>
<svg class="a" style="left:1115px;top:319px" width="17" height="17" viewBox="0 0 17 17"><path d="M8 2 H2 V15 H15 V9" stroke="#1c2b33" stroke-width="1.5" fill="none"/><path d="M8 9 L15 2 M10 1.5 H15.5 V7" stroke="#1c2b33" stroke-width="1.5" fill="none"/></svg>
<svg class="a" style="left:1154.5px;top:325px" width="11" height="6" viewBox="0 0 11 6"><path d="M0 0 H11 L5.5 6 Z" fill="#1c2b33"/></svg>
<div class="btn" style="left:1186px;top:311px;width:38px;height:33px;border-color:#cfd4da"></div>
<svg class="a" style="left:1196px;top:319px" width="17" height="17" viewBox="0 0 17 17"><rect x="1" y="1" width="15" height="15" rx="1.5" stroke="#1c2b33" stroke-width="1.4" fill="none"/><path d="M3.5 12.5 L7 8.5 L9.5 10.5 L13.5 5.5 M10.5 5 H13.8 V8" stroke="#1c2b33" stroke-width="1.4" fill="none"/></svg>
<!--/P2-->
<!--P3-->
<div class="a" style="left:60px;top:390px;width:1171px;height:43px;background:#fff"></div>
<div class="a" style="left:60px;top:433px;width:1171px;height:43px;background:#f5f6f8"></div>
<div class="a" style="left:60px;top:476px;width:1171px;height:43px;background:#ebf3fd"></div>
<div class="a" style="left:60px;top:519px;width:1171px;height:43px;background:#f5f6f8"></div>
<div class="a" style="left:60px;top:562px;width:1171px;height:43px;background:#fff"></div>
<div class="a" style="left:105px;top:352px;width:1px;height:315px;background:#dfe2e6"></div>
<div class="a" style="left:193px;top:352px;width:1px;height:315px;background:#dfe2e6"></div>
<div class="a" style="left:414px;top:352px;width:1px;height:315px;background:#dfe2e6"></div>
<div class="a" style="left:540px;top:352px;width:1px;height:315px;background:#dfe2e6"></div>
<div class="a" style="left:641px;top:352px;width:1px;height:315px;background:#dfe2e6"></div>
<div class="a" style="left:718px;top:352px;width:1px;height:315px;background:#dfe2e6"></div>
<div class="a" style="left:802px;top:352px;width:1px;height:315px;background:#dfe2e6"></div>
<div class="a" style="left:885px;top:352px;width:1px;height:315px;background:#dfe2e6"></div>
<div class="a" style="left:1002px;top:352px;width:1px;height:315px;background:#dfe2e6"></div>
<div class="a" style="left:1104px;top:352px;width:1px;height:315px;background:#dfe2e6"></div>
<div class="a" style="left:1201px;top:352px;width:1px;height:315px;background:#dfe2e6"></div>
<div class="a" style="left:71px;top:400.5px;width:23px;height:22px;border:1px solid #d5d9de;border-radius:4px;background:#fff"></div>
<div class="a" style="left:132px;top:401.5px;width:35px;height:20px;border-radius:10px;background:#e3ebf4;border:1px solid #d3dae3"></div>
<div class="a" style="left:148px;top:402.0px;width:19px;height:19px;border-radius:10px;background:#0a78be"></div>
<div class="a" style="left:71px;top:443.5px;width:23px;height:22px;border:1px solid #d5d9de;border-radius:4px;background:#fff"></div>
<div class="a" style="left:132px;top:444.5px;width:35px;height:20px;border-radius:10px;background:#e3ebf4;border:1px solid #d3dae3"></div>
<div class="a" style="left:148px;top:445.0px;width:19px;height:19px;border-radius:10px;background:#0a78be"></div>
<div class="a" style="left:71px;top:486.5px;width:23px;height:22px;border:1px solid #d5d9de;border-radius:4px;background:#fff"></div>
<svg class="a" style="left:75px;top:491.5px" width="14" height="12" viewBox="0 0 14 12"><path d="M1.5 6 L5 9.5 L12.5 2" stroke="#0a78be" stroke-width="2" fill="none"/></svg>
<div class="a" style="left:132px;top:487.5px;width:35px;height:20px;border-radius:10px;background:#e3ebf4;border:1px solid #d3dae3"></div>
<div class="a" style="left:148px;top:488.0px;width:19px;height:19px;border-radius:10px;background:#0a78be"></div>
<div class="a" style="left:71px;top:529.5px;width:23px;height:22px;border:1.5px solid #3b87c4;border-radius:4px;background:#fff"></div>
<div class="a" style="left:132px;top:530.5px;width:35px;height:20px;border-radius:10px;background:#e3ebf4;border:1px solid #d3dae3"></div>
<div class="a" style="left:148px;top:531.0px;width:19px;height:19px;border-radius:10px;background:#0a78be"></div>
<div class="a" style="left:71px;top:572.5px;width:23px;height:22px;border:1px solid #d5d9de;border-radius:4px;background:#fff"></div>
<div class="a" style="left:132px;top:573.5px;width:35px;height:20px;border-radius:10px;background:#e3ebf4;border:1px solid #d3dae3"></div>
<div class="a" style="left:148px;top:574.0px;width:19px;height:19px;border-radius:10px;background:#0a78be"></div>
<div class="a" style="left:201px;top:390px;width:44px;height:43px;overflow:hidden;background:#f3f6f4"><div class="a" style="left:0;top:0;width:44px;height:43px;filter:blur(0.5px)"><div class="a" style="left:13px;top:0;width:18px;height:13px;background:#a9dcc1"></div><div class="a" style="left:6.0px;top:5px;width:6px;height:8px;border-radius:3.0px 3.0px 2.4px 2.4px;background:#a88468;border-top:1.76px solid #2a2626"></div><div class="a" style="left:5.0px;top:12px;width:8px;height:8px;border-radius:2.6666666666666665px 2.6666666666666665px 0 0;background:#8f8c6a"></div><div class="a" style="left:14.5px;top:5px;width:6px;height:8px;border-radius:3.0px 3.0px 2.4px 2.4px;background:#d2b29a;border-top:1.76px solid #2a2626"></div><div class="a" style="left:13.5px;top:12px;width:8px;height:8px;border-radius:2.6666666666666665px 2.6666666666666665px 0 0;background:#eef0f0"></div><div class="a" style="left:23.0px;top:5px;width:6px;height:8px;border-radius:3.0px 3.0px 2.4px 2.4px;background:#9c7c66;border-top:1.76px solid #2a2626"></div><div class="a" style="left:22.0px;top:12px;width:8px;height:8px;border-radius:2.6666666666666665px 2.6666666666666665px 0 0;background:#3d4145"></div><div class="a" style="left:32.0px;top:5px;width:6px;height:8px;border-radius:3.0px 3.0px 2.4px 2.4px;background:#c4a48c;border-top:1.76px solid #2a2626"></div><div class="a" style="left:31.0px;top:12px;width:8px;height:8px;border-radius:2.6666666666666665px 2.6666666666666665px 0 0;background:#4a4f5a"></div><div class="a" style="left:7px;top:24px;width:15px;height:2px;background:#3a3a3a"></div><div class="a" style="left:7px;top:27px;width:13px;height:11px;background:#d9ebe0"></div><div class="a" style="left:24px;top:26px;width:13px;height:11px;border-radius:5px;background:#a6dbc0"></div><div class="a" style="left:0;top:0;width:4.5px;height:43px;background:#050505"></div><div class="a" style="left:39px;top:0;width:5px;height:43px;background:#050505"></div></div></div>
<div class="a nw" style="left:252px;top:395.5px;font-size:13.7px;color:#1c2b33">Video Nuntut</div>
<div class="a nw" style="left:399px;top:395.5px;width:15px;overflow:hidden;font-size:13.4px;color:#1c2b33;text-indent:-6px">%</div>
<div class="a" style="left:201px;top:433px;width:44px;height:43px;overflow:hidden;background:#f3f6f4"><div class="a" style="left:0;top:0;width:44px;height:43px;filter:blur(0.5px)"><div class="a" style="left:13px;top:0;width:18px;height:13px;background:#a9dcc1"></div><div class="a" style="left:6.0px;top:5px;width:6px;height:8px;border-radius:3.0px 3.0px 2.4px 2.4px;background:#a88468;border-top:1.76px solid #2a2626"></div><div class="a" style="left:5.0px;top:12px;width:8px;height:8px;border-radius:2.6666666666666665px 2.6666666666666665px 0 0;background:#8f8c6a"></div><div class="a" style="left:14.5px;top:5px;width:6px;height:8px;border-radius:3.0px 3.0px 2.4px 2.4px;background:#d2b29a;border-top:1.76px solid #2a2626"></div><div class="a" style="left:13.5px;top:12px;width:8px;height:8px;border-radius:2.6666666666666665px 2.6666666666666665px 0 0;background:#eef0f0"></div><div class="a" style="left:23.0px;top:5px;width:6px;height:8px;border-radius:3.0px 3.0px 2.4px 2.4px;background:#9c7c66;border-top:1.76px solid #2a2626"></div><div class="a" style="left:22.0px;top:12px;width:8px;height:8px;border-radius:2.6666666666666665px 2.6666666666666665px 0 0;background:#3d4145"></div><div class="a" style="left:32.0px;top:5px;width:6px;height:8px;border-radius:3.0px 3.0px 2.4px 2.4px;background:#c4a48c;border-top:1.76px solid #2a2626"></div><div class="a" style="left:31.0px;top:12px;width:8px;height:8px;border-radius:2.6666666666666665px 2.6666666666666665px 0 0;background:#4a4f5a"></div><div class="a" style="left:7px;top:24px;width:15px;height:2px;background:#3a3a3a"></div><div class="a" style="left:7px;top:27px;width:13px;height:11px;background:#d9ebe0"></div><div class="a" style="left:24px;top:26px;width:13px;height:11px;border-radius:5px;background:#a6dbc0"></div><div class="a" style="left:0;top:0;width:4.5px;height:43px;background:#050505"></div><div class="a" style="left:39px;top:0;width:5px;height:43px;background:#050505"></div></div></div>
<div class="a nw" style="left:252px;top:438.5px;font-size:13.7px;color:#1c2b33">Video Capek</div>
<div class="a nw" style="left:399px;top:438.5px;width:15px;overflow:hidden;font-size:13.4px;color:#1c2b33;text-indent:-6px">%</div>
<div class="a" style="left:201px;top:476px;width:44px;height:43px;overflow:hidden;background:#f3f6f4"><div class="a" style="left:0;top:0;width:44px;height:43px;filter:blur(0.5px)"><div class="a" style="left:0;top:0;width:22px;height:43px;background:#050505"></div><div class="a" style="left:33px;top:0;width:11px;height:10px;background:#a9dcc1;filter:blur(1px)"></div><div class="a" style="left:24px;top:6px;width:8px;height:9px;border-radius:4px;background:#b39680;filter:blur(1.2px)"></div><div class="a" style="left:22px;top:14px;width:11px;height:8px;background:#8a8570;filter:blur(1.2px)"></div><div class="a" style="left:34px;top:6px;width:8px;height:9px;border-radius:4px;background:#c9b5a5;filter:blur(1.2px)"></div><div class="a" style="left:33px;top:14px;width:11px;height:8px;background:#d8dcdc;filter:blur(1.2px)"></div><div class="a" style="left:26px;top:25px;width:14px;height:2px;background:#4a4a4a"></div><div class="a" style="left:27px;top:28px;width:15px;height:9px;background:#cfe9dc"></div><div class="a" style="left:18px;top:0;width:8px;height:43px;background:linear-gradient(90deg,#050505,rgba(5,5,5,0))"></div></div></div>
<div class="a nw" style="left:252px;top:481.5px;font-size:13.7px;color:#1c2b33">Video tanggungjawab</div>
<div class="a nw" style="left:399px;top:481.5px;width:15px;overflow:hidden;font-size:13.4px;color:#1c2b33;text-indent:-6px">%</div>
<div class="a" style="left:201px;top:519px;width:44px;height:43px;overflow:hidden;background:#f3f6f4"><div class="a" style="left:0;top:0;width:44px;height:43px;filter:blur(0.5px)"><div class="a" style="left:12px;top:0;width:20px;height:11px;background:#a9dcc1"></div><div class="a" style="left:1.5px;top:2px;width:8px;height:10px;border-radius:4.0px 4.0px 3.2px 3.2px;background:#a88468;border-top:2.2px solid #2a2626"></div><div class="a" style="left:0.5px;top:11px;width:10px;height:10px;border-radius:3.3333333333333335px 3.3333333333333335px 0 0;background:#8f8c6a"></div><div class="a" style="left:11.5px;top:2px;width:8px;height:10px;border-radius:4.0px 4.0px 3.2px 3.2px;background:#d2b29a;border-top:2.2px solid #2a2626"></div><div class="a" style="left:10.5px;top:11px;width:10px;height:10px;border-radius:3.3333333333333335px 3.3333333333333335px 0 0;background:#eef0f0"></div><div class="a" style="left:23.0px;top:2px;width:8px;height:10px;border-radius:4.0px 4.0px 3.2px 3.2px;background:#9c7c66;border-top:2.2px solid #2a2626"></div><div class="a" style="left:22.0px;top:11px;width:10px;height:10px;border-radius:3.3333333333333335px 3.3333333333333335px 0 0;background:#3d4145"></div><div class="a" style="left:34.0px;top:2px;width:8px;height:10px;border-radius:4.0px 4.0px 3.2px 3.2px;background:#c4a48c;border-top:2.2px solid #2a2626"></div><div class="a" style="left:33.0px;top:11px;width:10px;height:10px;border-radius:3.3333333333333335px 3.3333333333333335px 0 0;background:#4a4f5a"></div><div class="a" style="left:4px;top:26px;width:19px;height:2px;background:#3a3a3a"></div><div class="a" style="left:4px;top:29px;width:17px;height:11px;background:#d2eadd"></div><div class="a" style="left:25px;top:27px;width:17px;height:14px;border-radius:6px;background:#a6dbc0"></div></div></div>
<div class="a nw" style="left:252px;top:524.5px;font-size:13.7px;color:#1c2b33">Image</div>
<div class="a nw" style="left:399px;top:524.5px;width:15px;overflow:hidden;font-size:13.4px;color:#1c2b33;text-indent:-6px">%</div>
<div class="a" style="left:201px;top:562px;width:44px;height:43px;overflow:hidden;background:#f3f6f4"><div class="a" style="left:0;top:0;width:44px;height:43px;filter:blur(0.5px)"><div class="a" style="left:13px;top:0;width:18px;height:13px;background:#a9dcc1"></div><div class="a" style="left:6.0px;top:5px;width:6px;height:8px;border-radius:3.0px 3.0px 2.4px 2.4px;background:#a88468;border-top:1.76px solid #2a2626"></div><div class="a" style="left:5.0px;top:12px;width:8px;height:8px;border-radius:2.6666666666666665px 2.6666666666666665px 0 0;background:#8f8c6a"></div><div class="a" style="left:14.5px;top:5px;width:6px;height:8px;border-radius:3.0px 3.0px 2.4px 2.4px;background:#d2b29a;border-top:1.76px solid #2a2626"></div><div class="a" style="left:13.5px;top:12px;width:8px;height:8px;border-radius:2.6666666666666665px 2.6666666666666665px 0 0;background:#eef0f0"></div><div class="a" style="left:23.0px;top:5px;width:6px;height:8px;border-radius:3.0px 3.0px 2.4px 2.4px;background:#9c7c66;border-top:1.76px solid #2a2626"></div><div class="a" style="left:22.0px;top:12px;width:8px;height:8px;border-radius:2.6666666666666665px 2.6666666666666665px 0 0;background:#3d4145"></div><div class="a" style="left:32.0px;top:5px;width:6px;height:8px;border-radius:3.0px 3.0px 2.4px 2.4px;background:#c4a48c;border-top:1.76px solid #2a2626"></div><div class="a" style="left:31.0px;top:12px;width:8px;height:8px;border-radius:2.6666666666666665px 2.6666666666666665px 0 0;background:#4a4f5a"></div><div class="a" style="left:7px;top:24px;width:15px;height:2px;background:#3a3a3a"></div><div class="a" style="left:7px;top:27px;width:13px;height:11px;background:#d9ebe0"></div><div class="a" style="left:24px;top:26px;width:13px;height:11px;border-radius:5px;background:#a6dbc0"></div><div class="a" style="left:0;top:0;width:4.5px;height:43px;background:#050505"></div><div class="a" style="left:39px;top:0;width:5px;height:43px;background:#050505"></div></div></div>
<div class="a nw" style="left:252px;top:567.5px;font-size:13.7px;color:#1c2b33">Video Selingkuh</div>
<div class="a nw" style="left:399px;top:567.5px;width:15px;overflow:hidden;font-size:13.4px;color:#1c2b33;text-indent:-6px">%</div>
<div class="a nw" style="right:752px;top:396.5px;font-size:13.4px;color:#1c2b33;border-bottom:1px dotted #6b7580;line-height:13px;">2</div>
<div class="a nw" style="right:650px;top:396.5px;font-size:13.4px;color:#1c2b33;border-bottom:1px dotted #6b7580;line-height:13px;">Rp3,087</div>
<div class="a" style="left:694.5px;top:404px;width:12.5px;height:1.4px;background:#50595f"></div>
<div class="a" style="left:777.5px;top:404px;width:12.5px;height:1.4px;background:#50595f"></div>
<div class="a" style="left:863.5px;top:404px;width:12.5px;height:1.4px;background:#50595f"></div>
<div class="a" style="left:981.5px;top:404px;width:12.5px;height:1.4px;background:#50595f"></div>
<div class="a" style="left:1083.5px;top:404px;width:12.5px;height:1.4px;background:#50595f"></div>
<div class="a" style="left:1180.5px;top:404px;width:12.5px;height:1.4px;background:#50595f"></div>
<div class="a nw" style="right:752px;top:439.5px;font-size:13.4px;color:#1c2b33;border-bottom:1px dotted #6b7580;line-height:13px;">8</div>
<div class="a nw" style="right:650px;top:439.5px;font-size:13.4px;color:#1c2b33;border-bottom:1px dotted #6b7580;line-height:13px;">Rp1,115</div>
<div class="a" style="left:694.5px;top:447px;width:12.5px;height:1.4px;background:#50595f"></div>
<div class="a" style="left:777.5px;top:447px;width:12.5px;height:1.4px;background:#50595f"></div>
<div class="a" style="left:863.5px;top:447px;width:12.5px;height:1.4px;background:#50595f"></div>
<div class="a" style="left:981.5px;top:447px;width:12.5px;height:1.4px;background:#50595f"></div>
<div class="a" style="left:1083.5px;top:447px;width:12.5px;height:1.4px;background:#50595f"></div>
<div class="a" style="left:1180.5px;top:447px;width:12.5px;height:1.4px;background:#50595f"></div>
<div class="a nw" style="right:752px;top:482.5px;font-size:13.4px;color:#1c2b33;border-bottom:1px dotted #6b7580;line-height:13px;">3</div>
<div class="a nw" style="right:650px;top:482.5px;font-size:13.4px;color:#1c2b33;border-bottom:1px dotted #6b7580;line-height:13px;">Rp13,367</div>
<div class="a nw" style="right:573px;top:482.5px;font-size:13.4px;color:#1c2b33;border-bottom:1px dotted #6b7580;line-height:13px;">1</div>
<div class="a nw" style="right:490px;top:482.5px;font-size:13.4px;color:#1c2b33;border-bottom:1px dotted #6b7580;line-height:13px;">Rp40,102</div>
<div class="a nw" style="right:404px;top:482.5px;font-size:13.4px;color:#1c2b33;border-bottom:1px dotted #6b7580;line-height:13px;">33.33%</div>
<div class="a" style="left:981.5px;top:490px;width:12.5px;height:1.4px;background:#50595f"></div>
<div class="a" style="left:1083.5px;top:490px;width:12.5px;height:1.4px;background:#50595f"></div>
<div class="a" style="left:1180.5px;top:490px;width:12.5px;height:1.4px;background:#50595f"></div>
<div class="a nw" style="right:752px;top:525.5px;font-size:13.4px;color:#1c2b33;border-bottom:1px dotted #6b7580;line-height:13px;">8</div>
<div class="a nw" style="right:650px;top:525.5px;font-size:13.4px;color:#1c2b33;border-bottom:1px dotted #6b7580;line-height:13px;">Rp5,729</div>
<div class="a" style="left:694.5px;top:533px;width:12.5px;height:1.4px;background:#50595f"></div>
<div class="a" style="left:777.5px;top:533px;width:12.5px;height:1.4px;background:#50595f"></div>
<div class="a" style="left:863.5px;top:533px;width:12.5px;height:1.4px;background:#50595f"></div>
<div class="a" style="left:981.5px;top:533px;width:12.5px;height:1.4px;background:#50595f"></div>
<div class="a" style="left:1083.5px;top:533px;width:12.5px;height:1.4px;background:#50595f"></div>
<div class="a" style="left:1180.5px;top:533px;width:12.5px;height:1.4px;background:#50595f"></div>
<div class="a nw" style="right:752px;top:568.5px;font-size:13.4px;color:#1c2b33;border-bottom:1px dotted #6b7580;line-height:13px;">12</div>
<div class="a nw" style="right:650px;top:568.5px;font-size:13.4px;color:#1c2b33;border-bottom:1px dotted #6b7580;line-height:13px;">Rp3,702</div>
<div class="a" style="left:694.5px;top:576px;width:12.5px;height:1.4px;background:#50595f"></div>
<div class="a" style="left:777.5px;top:576px;width:12.5px;height:1.4px;background:#50595f"></div>
<div class="a" style="left:863.5px;top:576px;width:12.5px;height:1.4px;background:#50595f"></div>
<div class="a" style="left:981.5px;top:576px;width:12.5px;height:1.4px;background:#50595f"></div>
<div class="a" style="left:1083.5px;top:576px;width:12.5px;height:1.4px;background:#50595f"></div>
<div class="a" style="left:1180.5px;top:576px;width:12.5px;height:1.4px;background:#50595f"></div>
<div class="a" style="left:60px;top:595px;width:1171px;height:72px;background:#fff;border-top:2px solid #e3e6ea"></div>
<div class="a" style="left:193px;top:597px;width:1px;height:70px;background:#dfe2e6"></div>
<div class="a" style="left:414px;top:597px;width:1px;height:70px;background:#dfe2e6"></div>
<div class="a" style="left:540px;top:597px;width:1px;height:70px;background:#dfe2e6"></div>
<div class="a" style="left:641px;top:597px;width:1px;height:70px;background:#dfe2e6"></div>
<div class="a" style="left:718px;top:597px;width:1px;height:70px;background:#dfe2e6"></div>
<div class="a" style="left:802px;top:597px;width:1px;height:70px;background:#dfe2e6"></div>
<div class="a" style="left:885px;top:597px;width:1px;height:70px;background:#dfe2e6"></div>
<div class="a" style="left:1002px;top:597px;width:1px;height:70px;background:#dfe2e6"></div>
<div class="a" style="left:1104px;top:597px;width:1px;height:70px;background:#dfe2e6"></div>
<div class="a" style="left:1201px;top:597px;width:1px;height:70px;background:#dfe2e6"></div>
<div class="a" style="left:60px;top:667px;width:1171px;height:1px;background:#e3e6ea"></div>
<div class="a nw" style="left:205px;top:605.5px;font-size:13.2px;color:#1c2b33">Results from 7 ads</div>
<div class="a" style="left:320px;top:606.5px;width:12px;height:12px;border-radius:6px;background:#1c2b33;color:#fff;font-size:9px;font-weight:bold;text-align:center;line-height:12px;font-family:Liberation Serif">i</div>
<div class="a nw" style="left:399px;top:605.5px;width:15px;overflow:hidden;font-size:13.4px;color:#1c2b33;text-indent:-6px">%</div>
<div class="a nw" style="right:750px;top:605px;font-size:13.4px;color:#1c2b33;border-bottom:1px dotted #6b7580;line-height:13px;">33</div>
<div class="a nw" style="right:650px;top:605px;font-size:13.4px;color:#1c2b33;border-bottom:1px dotted #6b7580;line-height:13px;">Rp4,417</div>
<div class="a nw" style="right:572px;top:605px;font-size:13.4px;color:#1c2b33;border-bottom:1px dotted #6b7580;line-height:13px;">1</div>
<div class="a nw" style="right:490px;top:605px;font-size:13.4px;color:#1c2b33;border-bottom:1px dotted #6b7580;line-height:13px;">Rp145,7...</div>
<div class="a nw" style="right:404px;top:605px;font-size:13.4px;color:#1c2b33;border-bottom:1px dotted #6b7580;line-height:13px;">3.03%</div>
<div class="a" style="left:983.5px;top:613px;width:12.5px;height:1.4px;background:#50595f"></div>
<div class="a" style="left:1084.5px;top:613px;width:12.5px;height:1.4px;background:#50595f"></div>
<div class="a" style="left:1181.5px;top:613px;width:12.5px;height:1.4px;background:#50595f"></div>
<div class="a nw" style="right:750px;top:624.5px;font-size:12.2px;color:#72767b">Total</div>
<div class="a nw" style="right:650px;top:624.5px;font-size:12.2px;color:#72767b">Per Action</div>
<div class="a nw" style="right:572px;top:624.5px;font-size:12.2px;color:#72767b">Total</div>
<div class="a nw" style="right:490px;top:624.5px;font-size:12.2px;color:#72767b">Per Action</div>
<div class="a nw" style="right:284px;top:624.5px;font-size:12.2px;color:#72767b">Total</div>
<div class="a nw" style="right:183px;top:624.5px;font-size:12.2px;color:#72767b">Per Action</div>
<div class="a nw" style="right:86px;top:624.5px;font-size:12.2px;color:#72767b">Average</div>
<div class="a" style="left:60px;top:352px;width:1171px;height:45px;background:#fff;border-top:1px solid #dfe2e6;box-shadow:0 2px 3px rgba(0,0,0,.08)"></div>
<div class="a" style="left:60px;top:396px;width:1171px;height:1px;background:#dfe2e6"></div>
<div class="a" style="left:105px;top:353px;width:1px;height:43px;background:#dfe2e6"></div>
<div class="a" style="left:193px;top:353px;width:1px;height:43px;background:#dfe2e6"></div>
<div class="a" style="left:414px;top:353px;width:1px;height:43px;background:#dfe2e6"></div>
<div class="a" style="left:540px;top:353px;width:1px;height:43px;background:#dfe2e6"></div>
<div class="a" style="left:641px;top:353px;width:1px;height:43px;background:#dfe2e6"></div>
<div class="a" style="left:718px;top:353px;width:1px;height:43px;background:#dfe2e6"></div>
<div class="a" style="left:802px;top:353px;width:1px;height:43px;background:#dfe2e6"></div>
<div class="a" style="left:885px;top:353px;width:1px;height:43px;background:#dfe2e6"></div>
<div class="a" style="left:1002px;top:353px;width:1px;height:43px;background:#dfe2e6"></div>
<div class="a" style="left:1104px;top:353px;width:1px;height:43px;background:#dfe2e6"></div>
<div class="a" style="left:1201px;top:353px;width:1px;height:43px;background:#dfe2e6"></div>
<div class="a" style="left:71px;top:364px;width:23px;height:22px;border:1px solid #d5d9de;border-radius:4px;background:#fff"></div>
<div class="a nw" style="left:115px;top:359.5px;font-size:12.5px;font-weight:bold;color:#1c2b33;line-height:17.5px"><span style="font-size:13.5px;letter-spacing:.3px">Off/On</span><br><span style="margin-left:5px;position:relative;top:1.5px"><svg width="13" height="11" viewBox="0 0 13 11" style="vertical-align:-1px"><path d="M3.2 10.5 V1.5 M0.5 4 L3.2 1.2 L5.9 4 M9.8 0.5 V9.5 M7.1 7 L9.8 9.8 L12.5 7" stroke="#1c2b33" stroke-width="1.5" fill="none"/></svg></span></div>
<div class="a nw" style="left:203px;top:368px;font-size:12.5px;font-weight:bold;color:#1c2b33;line-height:17.5px">Ad <svg width="13" height="11" viewBox="0 0 13 11" style="vertical-align:-1px"><path d="M3.2 10.5 V1.5 M0.5 4 L3.2 1.2 L5.9 4 M9.8 0.5 V9.5 M7.1 7 L9.8 9.8 L12.5 7" stroke="#1c2b33" stroke-width="1.5" fill="none"/></svg></div><svg class="a" style="left:381.0px;top:373.5px" width="10" height="5" viewBox="0 0 10 5"><path d="M0 0 H10 L5 5 Z" fill="#1c2b33"/></svg>
<svg class="a" style="left:398.0px;top:375.5px" width="10" height="5" viewBox="0 0 10 5"><path d="M0 0 H10 L5 5 Z" fill="#1c2b33"/></svg>
<div class="a nw" style="left:425px;top:359.5px;font-size:12.5px;font-weight:bold;color:#1c2b33;line-height:17.5px">Landing page<br>views <svg width="13" height="11" viewBox="0 0 13 11" style="vertical-align:-1px"><path d="M3.2 10.5 V1.5 M0.5 4 L3.2 1.2 L5.9 4 M9.8 0.5 V9.5 M7.1 7 L9.8 9.8 L12.5 7" stroke="#1c2b33" stroke-width="1.5" fill="none"/></svg></div><svg class="a" style="left:523.0px;top:375.5px" width="10" height="5" viewBox="0 0 10 5"><path d="M0 0 H10 L5 5 Z" fill="#1c2b33"/></svg>
<div class="a nw" style="left:551px;top:359.5px;font-size:12.5px;font-weight:bold;color:#1c2b33;line-height:17.5px">Cost per<br>landing...</div><svg class="a" style="left:625.0px;top:375.5px" width="10" height="5" viewBox="0 0 10 5"><path d="M0 0 H10 L5 5 Z" fill="#1c2b33"/></svg>
<div class="a nw" style="left:652px;top:359.5px;font-size:12.5px;font-weight:bold;color:#1c2b33;line-height:17.5px">Leads<br><span style="margin-left:4px;position:relative;top:1px"><svg width="13" height="11" viewBox="0 0 13 11" style="vertical-align:-1px"><path d="M3.2 10.5 V1.5 M0.5 4 L3.2 1.2 L5.9 4 M9.8 0.5 V9.5 M7.1 7 L9.8 9.8 L12.5 7" stroke="#1c2b33" stroke-width="1.5" fill="none"/></svg></span></div><svg class="a" style="left:701.0px;top:375.5px" width="10" height="5" viewBox="0 0 10 5"><path d="M0 0 H10 L5 5 Z" fill="#1c2b33"/></svg>
<div class="a nw" style="left:728px;top:359.5px;font-size:12.5px;font-weight:bold;color:#1c2b33;line-height:17.5px">Cost<br>per...</div><svg class="a" style="left:786.0px;top:375.5px" width="10" height="5" viewBox="0 0 10 5"><path d="M0 0 H10 L5 5 Z" fill="#1c2b33"/></svg>
<div class="a nw" style="left:813px;top:359.5px;font-size:12.5px;font-weight:bold;color:#1c2b33;line-height:17.5px">Lead<br>Ratio...</div><svg class="a" style="left:868.0px;top:375.5px" width="10" height="5" viewBox="0 0 10 5"><path d="M0 0 H10 L5 5 Z" fill="#1c2b33"/></svg>
<div class="a nw" style="left:895px;top:368px;font-size:12.5px;font-weight:bold;color:#1c2b33;line-height:17.5px">Purchases <svg width="13" height="11" viewBox="0 0 13 11" style="vertical-align:-1px"><path d="M3.2 10.5 V1.5 M0.5 4 L3.2 1.2 L5.9 4 M9.8 0.5 V9.5 M7.1 7 L9.8 9.8 L12.5 7" stroke="#1c2b33" stroke-width="1.5" fill="none"/></svg></div><svg class="a" style="left:985.0px;top:375.5px" width="10" height="5" viewBox="0 0 10 5"><path d="M0 0 H10 L5 5 Z" fill="#1c2b33"/></svg>
<div class="a nw" style="left:1012px;top:359.5px;font-size:12.5px;font-weight:bold;color:#1c2b33;line-height:17.5px">Cost per<br>purchase...</div><svg class="a" style="left:1087.0px;top:375.5px" width="10" height="5" viewBox="0 0 10 5"><path d="M0 0 H10 L5 5 Z" fill="#1c2b33"/></svg>
<div class="a nw" style="left:1114px;top:359.5px;font-size:12.5px;font-weight:bold;color:#1c2b33;line-height:17.5px">Purchase<br>ROAS...</div><svg class="a" style="left:1183.0px;top:375.5px" width="10" height="5" viewBox="0 0 10 5"><path d="M0 0 H10 L5 5 Z" fill="#1c2b33"/></svg>
<div class="a" style="left:1210px;top:369px;width:12px;height:12px;border-radius:6px;background:#c9ccd1"></div><div class="a" style="left:1213px;top:374.5px;width:6px;height:1.2px;background:#fff"></div><div class="a" style="left:1215.4px;top:372px;width:1.2px;height:6px;background:#fff"></div>
<div class="a" style="left:398px;top:352px;width:1px;height:315px;background:#d3d7dc"></div><div class="a" style="left:399px;top:352px;width:3px;height:315px;background:linear-gradient(90deg,rgba(0,0,0,.08),rgba(0,0,0,0))"></div>
<div class="a" style="left:1221px;top:462px;width:7px;height:123px;border-radius:4px;background:#c1c1c1"></div>
<div class="a" style="left:636px;top:670px;width:592px;height:7px;border-radius:4px;background:#c1c1c1"></div>
<!--/P3-->
<!--P4-->
<svg class="a" style="left:15px;top:195px" width="23" height="23" viewBox="0 0 23 23"><circle cx="11.5" cy="11.5" r="10" stroke="#1c2b33" stroke-width="1.4" fill="none"/><path d="M2 15 H21" stroke="#1c2b33" stroke-width="1.4"/><path d="M11.5 11 L15 7" stroke="#1c2b33" stroke-width="1.8" stroke-linecap="round"/><circle cx="6" cy="9" r=".8" fill="#1c2b33"/><circle cx="8.5" cy="5.5" r=".8" fill="#1c2b33"/><circle cx="13" cy="4.5" r=".8" fill="#1c2b33"/><circle cx="17.5" cy="8.5" r=".8" fill="#1c2b33"/></svg>
<div class="a" style="left:8px;top:226px;width:36px;height:36px;border-radius:5px;background:#e3edf8"></div>
<svg class="a" style="left:16px;top:235px" width="21" height="19" viewBox="0 0 21 19"><rect x="0" y="0" width="21" height="4.5" fill="#0a6fc2"/><rect x="0.0" y="6.0" width="6" height="3" fill="#0a6fc2"/><rect x="7.5" y="6.0" width="6" height="3" fill="#0a6fc2"/><rect x="15.0" y="6.0" width="6" height="3" fill="#0a6fc2"/><rect x="0.0" y="10.6" width="6" height="3" fill="#0a6fc2"/><rect x="7.5" y="10.6" width="6" height="3" fill="#0a6fc2"/><rect x="15.0" y="10.6" width="6" height="3" fill="#0a6fc2"/><rect x="0.0" y="15.2" width="6" height="3" fill="#0a6fc2"/><rect x="7.5" y="15.2" width="6" height="3" fill="#0a6fc2"/><rect x="15.0" y="15.2" width="6" height="3" fill="#0a6fc2"/></svg>
<svg class="a" style="left:14px;top:269px" width="25" height="25" viewBox="0 0 25 25"><path d="M16 5 L23 6.5 L19.5 23.5 L10 21.5" stroke="#1c2b33" stroke-width="1.3" fill="#fff" stroke-linejoin="round"/><rect x="2" y="2" width="15" height="19" rx="1" stroke="#1c2b33" stroke-width="1.3" fill="#fff"/><path d="M5 2 V21" stroke="#1c2b33" stroke-width="1.3"/><path d="M8 7 H13 M8 10 H13" stroke="#1c2b33" stroke-width="1.3"/></svg>
<svg class="a" style="left:14px;top:310px" width="25" height="17" viewBox="0 0 25 17"><g stroke="#1c2b33" stroke-width="1.3" fill="none"><circle cx="5" cy="5" r="2.4"/><circle cx="12.5" cy="3.8" r="2.8"/><circle cx="20" cy="5" r="2.4"/><path d="M1 13.5 Q1 9.5 5 9.5 Q7 9.5 8 10.5"/><path d="M24 13.5 Q24 9.5 20 9.5 Q18 9.5 17 10.5"/><path d="M6.5 15.5 Q6.5 9 12.5 9 Q18.5 9 18.5 15.5 Z"/><path d="M1 13.5 Q1 15.5 3 15.5 H6.5 M24 13.5 Q24 15.5 22 15.5 H18.5"/></g></svg>
<svg class="a" style="left:15px;top:348px" width="23" height="17" viewBox="0 0 23 17"><rect x="1" y="1" width="21" height="15" rx="2.5" stroke="#1c2b33" stroke-width="1.4" fill="none"/><rect x="1" y="5" width="21" height="3" fill="#1c2b33"/><path d="M5 12 H9 M11 12 H15" stroke="#1c2b33" stroke-width="1.2"/></svg>
<svg class="a" style="left:16px;top:384px" width="20" height="19" viewBox="0 0 20 19"><path d="M2 4.5 H7 L15 1 V14 L7 10.5 H2 Z" stroke="#1c2b33" stroke-width="1.3" fill="none" stroke-linejoin="round"/><path d="M4.5 10.5 V15" stroke="#1c2b33" stroke-width="1.5"/><circle cx="15" cy="14.5" r="2.3" fill="#fff" stroke="#1c2b33" stroke-width="1.2"/><path d="M15 10.5 V18.5 M11 14.5 H19 M12.2 11.7 L17.8 17.3 M17.8 11.7 L12.2 17.3" stroke="#1c2b33" stroke-width="1"/><circle cx="15" cy="14.5" r="1.8" fill="#fff"/></svg>
<svg class="a" style="left:14px;top:419px" width="26" height="25" viewBox="0 0 26 25"><g stroke="#1c2b33" stroke-width="1.3" fill="none"><circle cx="13" cy="7.5" r="6.3"/><circle cx="3.5" cy="18.5" r="2.3"/><circle cx="13" cy="21.5" r="2.3"/><circle cx="22.5" cy="18.5" r="2.3"/><path d="M8.5 12 L5 16.5 M13 13.8 V19.2 M17.5 12 L21 16.5"/></g></svg>
<div class="a" style="left:15px;top:462px;width:22px;height:1px;background:#d5d9de"></div>
<div class="a" style="left:9px;top:472px;width:34px;height:34px;border-radius:17px;background:#e2f1ec"></div>
<div class="a nw" style="left:19px;top:477px;font-size:19px;color:#2a7f78;font-weight:normal">?</div>
<svg class="a" style="left:16px;top:516px" width="21" height="19" viewBox="0 0 21 19"><path d="M4 3 V17 Q4 18 2.5 18 Q1 18 1 16.5 V6 H4" stroke="#1c2b33" stroke-width="1.3" fill="none"/><rect x="4" y="1" width="16" height="17" rx="1.5" stroke="#1c2b33" stroke-width="1.3" fill="none"/><rect x="7" y="4.5" width="4" height="4" fill="#1c2b33"/><path d="M13 5 H17 M13 8 H17 M7 11.5 H17 M7 14.5 H17" stroke="#1c2b33" stroke-width="1.3"/></svg>
<svg class="a" style="left:16px;top:549px" width="20" height="20" viewBox="0 0 20 20"><path d="M19.26 9.09 L16.89 12.09 L17.19 15.90 L13.39 16.35 L10.91 19.26 L7.91 16.89 L4.10 17.19 L3.65 13.39 L0.74 10.91 L3.11 7.91 L2.81 4.10 L6.61 3.65 L9.09 0.74 L12.09 3.11 L15.90 2.81 L16.35 6.61 Z" stroke="#1c2b33" stroke-width="1.3" fill="none" stroke-linejoin="round"/><circle cx="10" cy="10" r="3.2" stroke="#1c2b33" stroke-width="1.3" fill="none"/></svg>
<svg class="a" style="left:16px;top:580px" width="21" height="23" viewBox="0 0 21 23"><path d="M3 17 Q5 15 5 11 Q5 5 10.5 5 Q16 5 16 11 Q16 15 18 17 Z" stroke="#1c2b33" stroke-width="1.3" fill="none" stroke-linejoin="round"/><path d="M8 19.5 Q10.5 22 13 19.5" stroke="#1c2b33" stroke-width="1.3" fill="none"/></svg>
<div class="a" style="left:22px;top:578px;width:25px;height:15px;border-radius:8px;background:#b3141f;color:#fff;font-size:11.5px;font-weight:bold;text-align:center;line-height:15px">76</div>
<svg class="a" style="left:16px;top:617px" width="21" height="20" viewBox="0 0 21 20"><circle cx="8.5" cy="8.5" r="7" stroke="#1c2b33" stroke-width="1.4" fill="none"/><path d="M13.5 13.5 L19.5 19.3" stroke="#1c2b33" stroke-width="1.6"/></svg>
<svg class="a" style="left:16px;top:650px" width="21" height="19" viewBox="0 0 21 19"><g stroke="#1c2b33" stroke-width="1.2" fill="none"><ellipse cx="10.5" cy="11" rx="5.5" ry="6.5"/><path d="M5.2 8.5 H15.8 M10.5 8.5 V17.5 M6 1 L8 4 M15 1 L13 4 M5 7 L2 5.5 M16 7 L19 5.5 M4.8 11.5 H1.5 M16.2 11.5 H19.5 M5.5 15 L2.5 17 M15.5 15 L18.5 17"/></g></svg>
<!--/P4-->
</body></html>
